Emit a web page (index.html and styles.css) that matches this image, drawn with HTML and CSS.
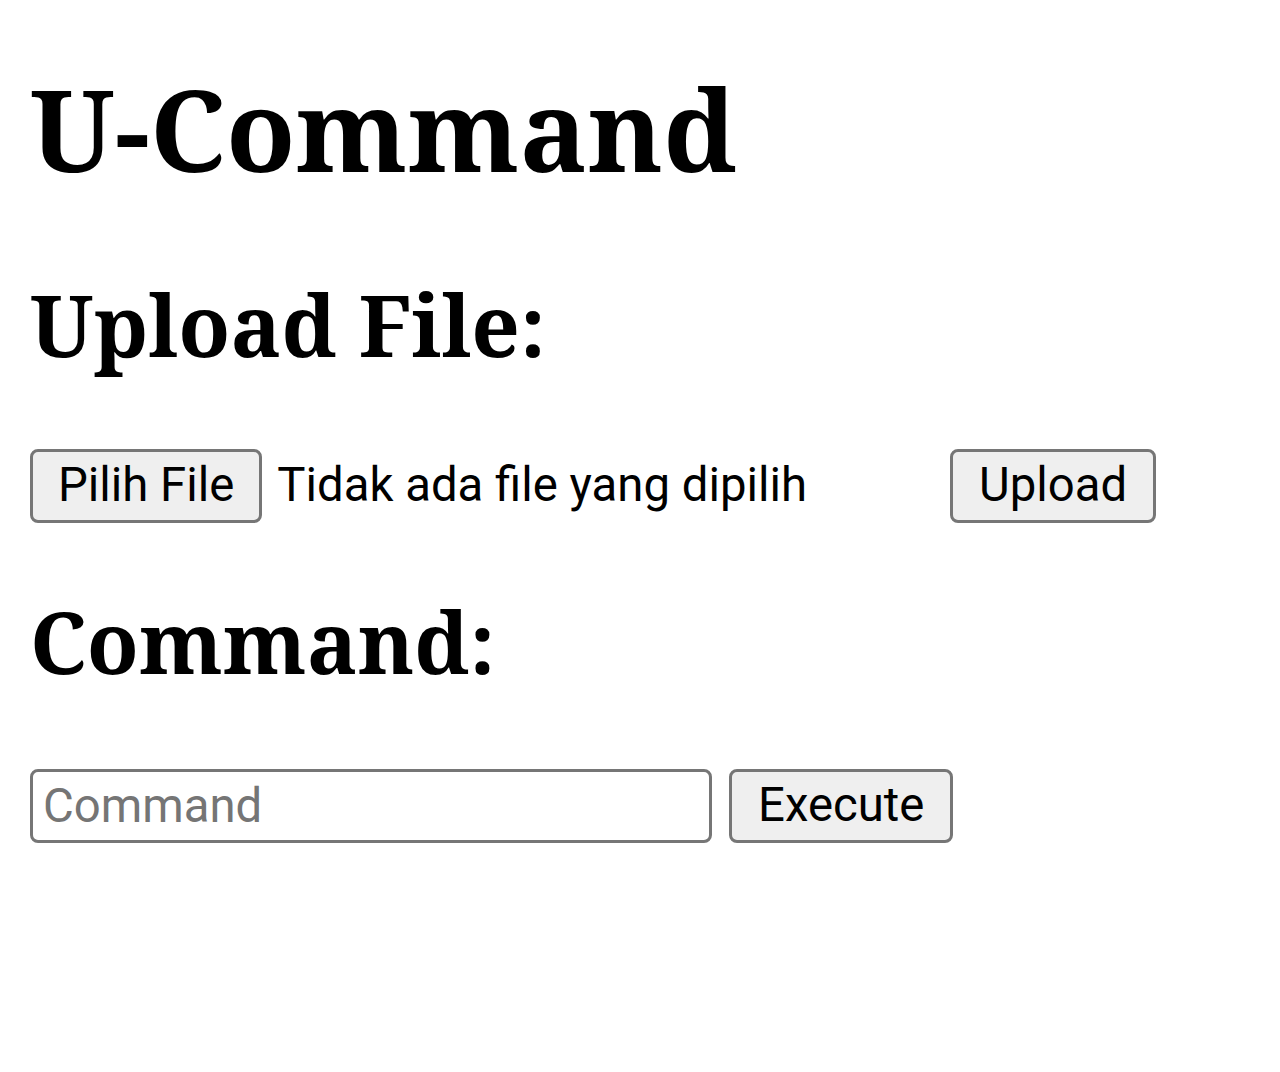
FILE: index.html
```html
<!DOCTYPE html>
<html lang="id">
<head>
<meta charset="utf-8">
<title>U-Command</title>
<link rel="stylesheet" href="styles.css">
</head>
<body>
  <main class="page">
    <h1 class="title">U-Command</h1>
    <h2 class="section section-upload">Upload File:</h2>
    <form class="row row-upload">
      <label class="file">
        <span class="btn">Pilih File</span>
        <span class="file-name">Tidak ada file yang dipilih</span>
      </label>
      <button type="button" class="btn">Upload</button>
    </form>
    <h2 class="section section-command">Command:</h2>
    <form class="row row-command">
      <input class="field" type="text" placeholder="Command">
      <button type="button" class="btn">Execute</button>
    </form>
  </main>
</body>
</html>
```
FILE: styles.css
```css
html, body {
  margin: 0;
  padding: 0;
  background: #ffffff;
  color: #000000;
}

.page {
  padding: 47px 30px 0;
  display: flex;
  flex-direction: column;
  align-items: flex-start;
}

.title {
  margin: 0;
  font-family: "Noto Serif", "DejaVu Serif", serif;
  font-weight: 700;
  font-size: 113.5px;
  line-height: 163px;
}

.section {
  margin: 0;
  font-family: "Noto Serif", "DejaVu Serif", serif;
  font-weight: 700;
  font-size: 85px;
  line-height: 122px;
}

.section-upload { margin-top: 53px; }
.section-command { margin-top: 57px; }

.row {
  margin: 0;
  display: flex;
  align-items: center;
  gap: 17px;
}

.row-upload { margin-top: 64px; gap: 15px; }
.row-command { margin-top: 67px; }

.file {
  display: flex;
  align-items: center;
  gap: 15px;
  width: 905px;
}

.btn {
  box-sizing: border-box;
  display: inline-flex;
  align-items: center;
  justify-content: center;
  height: 74px;
  padding: 0 25px;
  border: 3px solid #767676;
  border-radius: 8px;
  background: #efefef;
  color: #000000;
  font-family: Roboto, "Liberation Sans", sans-serif;
  font-size: 47.3px;
  line-height: 1;
  cursor: default;
}

.row-upload > .btn,
.row-command > .btn {
  padding: 0 26px;
}

.file-name {
  font-family: Roboto, "Liberation Sans", sans-serif;
  font-size: 47.3px;
  line-height: 1;
  white-space: nowrap;
}

.field {
  box-sizing: border-box;
  width: 682px;
  height: 74px;
  margin: 0;
  padding: 0 10px;
  border: 3px solid #767676;
  border-radius: 8px;
  background: #ffffff;
  font-family: Roboto, "Liberation Sans", sans-serif;
  font-size: 47.3px;
  color: #000000;
  outline: none;
}

.field::placeholder {
  color: #757575;
  opacity: 1;
}
```
